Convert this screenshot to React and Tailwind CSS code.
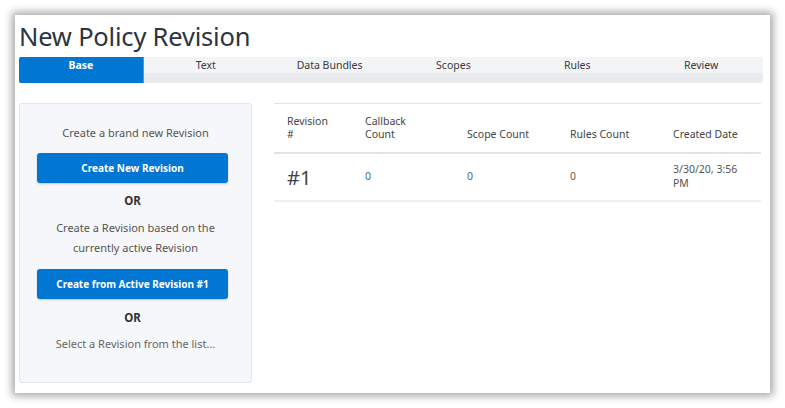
import React from 'react';

const tabs = ['Base', 'Text', 'Data Bundles', 'Scopes', 'Rules', 'Review'];

const cols = 'grid grid-cols-[78px_102px_103px_103px_1fr] pl-[13px]';

const App = () => {
  return (
    <div className="w-[785px] h-[408px] bg-white p-[15px] pb-[15px]" style={{ fontFamily: '"Noto Sans", "Open Sans", sans-serif' }}>
      <div className="h-[378px] w-[755px] bg-white shadow-[0_0_8px_3px_rgba(0,0,0,0.35)] pl-[4px] pr-[7px]">
        <h1 className="text-[25.5px] leading-[41px] text-[#2b3440] pt-[1px] tracking-[-0.2px]">New Policy Revision</h1>

        <div className="flex h-[26px]">
          {tabs.map((t, i) => (
            i === 0 ? (
              <div key={t} className="flex-1 bg-[#0176d3] border-r border-[#4a9ae0] rounded-tl-[2px] rounded-bl-[2px] flex justify-center">
                <span className="text-[10.5px] font-bold text-white leading-[16px]">{t}</span>
              </div>
            ) : (
              <div key={t} className="flex-1 flex flex-col">
                <div className="h-[16px] bg-[#f3f4f6] flex justify-center">
                  <span className="text-[10.5px] text-[#3a3a3a] leading-[16px]">{t}</span>
                </div>
                <div className={`flex-1 bg-[#e8eaed] ${i === 5 ? 'rounded-br-[3px]' : ''}`} />
              </div>
            )
          ))}
        </div>

        <div className="flex gap-[22px] mt-[20px]">
          <div className="w-[233px] h-[280px] shrink-0 bg-[#f5f7fa] border border-[#e3e6ea] rounded-[3px] pl-[17px] pr-[23px] pt-[19px] flex flex-col items-center text-[11px] text-[#555]">
            <p className="leading-[20px] pl-[6px]">Create a brand new Revision</p>
            <button className="mt-[10px] w-[191px] h-[30px] bg-[#0176d3] rounded-[3px] shadow-[0_1px_2px_rgba(0,0,0,0.2)] text-white text-[10px] font-bold">Create New Revision</button>
            <p className="mt-[8px] font-bold text-[11.5px] text-[#333] leading-[20px]">OR</p>
            <p className="mt-[7px] text-center leading-[20px] w-[200px] pl-[6px]">Create a Revision based on the currently active Revision</p>
            <button className="mt-[11px] w-[191px] h-[30px] bg-[#0176d3] rounded-[3px] shadow-[0_1px_2px_rgba(0,0,0,0.2)] text-white text-[10px] font-bold">Create from Active Revision #1</button>
            <p className="mt-[9px] font-bold text-[11.5px] text-[#333] leading-[20px]">OR</p>
            <p className="mt-[6px] leading-[20px] text-[#666] pl-[6px]">Select a Revision from the list...</p>
          </div>

          <div className="flex-1 pr-[2px]">
            <div className={`${cols} border-t border-[#e3e3e3] border-b-2 border-b-[#e3e3e3] pt-[11px] pb-[11px] text-[10.5px] leading-[13px] text-[#444]`}>
              <div>Revision<br />#</div>
              <div>Callback<br />Count</div>
              <div className="self-end">Scope Count</div>
              <div className="self-end">Rules Count</div>
              <div className="self-end">Created Date</div>
            </div>
            <div className={`${cols} border-b-2 border-[#efefef] h-[48px] items-center text-[10.5px] text-[#555]`}>
              <div className="text-[20px] text-[#444] leading-[24px] pt-[1px]">#1</div>
              <div className="text-[#3a6a9a]">0</div>
              <div className="text-[#3a6a9a]">0</div>
              <div className="text-[#7a5a4a]">0</div>
              <div className="leading-[14px] -mt-[2px]">3/30/20, 3:56<br />PM</div>
            </div>
          </div>
        </div>
      </div>
    </div>
  );
};

export default App;
